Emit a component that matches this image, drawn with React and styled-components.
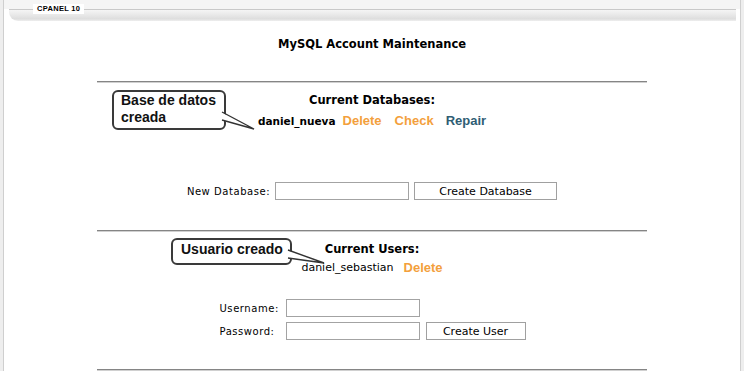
import React from "react";
import styled, { createGlobalStyle } from "styled-components";

const GlobalStyle = createGlobalStyle`
  html, body {
    margin: 0;
    padding: 0;
  }
  body {
    background: #eeeeee;
    font-family: "DejaVu Sans", Verdana, sans-serif;
    color: #000;
  }
`;

const Frame = styled.div`
  margin: 0 3px;
  min-height: 100vh;
  background: #fff;
  border-left: 1px solid #cfcfcf;
  border-right: 1px solid #cfcfcf;
  overflow: hidden;
`;

const Header = styled.div`
  position: relative;
  display: flex;
  height: 21px;
  padding: 9px 4px 0 5px;
  box-sizing: border-box;
  background: linear-gradient(to bottom, #f5f5f5 0, #f5f5f5 9px, #fff 9px);
`;

const Band = styled.div`
  flex: 1;
  height: 11px;
  border-top: 1px solid #c9c9c9;
  border-radius: 0 0 0 9px;
  background: linear-gradient(to bottom, #f5f5f5, #dedede 80%, #eeeeee);
`;

const Legend = styled.span`
  position: absolute;
  left: 29px;
  top: 4px;
  padding: 0 4px;
  background: #fff;
  font-family: "Liberation Sans", Arial, sans-serif;
  font-size: 7.5px;
  font-weight: bold;
  line-height: 10px;
  letter-spacing: 0.3px;
`;

const Content = styled.div`
  width: 550px;
  margin: 0 auto;
`;

const Title = styled.h1`
  margin: 16px 0 0;
  font-size: 11.5px;
  line-height: 14px;
  font-weight: bold;
  text-align: center;
`;

const Rule = styled.hr`
  margin: ${(p) => p.$top || 0}px 0 0;
  height: 0;
  border: 0;
  border-top: 1px solid #858585;
  border-bottom: 1px solid #d0d0d0;
`;

const Section = styled.section`
  position: relative;
  padding: 10px 0 ${(p) => p.$bottom}px;
`;

const Heading = styled.h2`
  margin: 0;
  font-size: 11.5px;
  line-height: 14px;
  font-weight: bold;
  text-align: center;
`;

const ItemRow = styled.div`
  display: flex;
  justify-content: center;
  align-items: center;
  margin-top: ${(p) => p.$top}px;
  line-height: 16px;
`;

const ItemName = styled.span`
  font-size: ${(p) => (p.$bold ? "10.5px" : "11px")};
  font-weight: ${(p) => (p.$bold ? "bold" : "normal")};
`;

const Action = styled.a`
  margin-left: ${(p) => p.$space}px;
  font-family: "Liberation Sans", Arial, sans-serif;
  font-size: 13px;
  font-weight: bold;
  color: ${(p) => (p.$tone === "blue" ? "#2f5d73" : "#f3a03c")};
  text-decoration: none;
  cursor: pointer;
`;

const FormRow = styled.div`
  display: flex;
  justify-content: center;
  align-items: center;
  gap: 5px;
  margin-top: 53px;
`;

const FormGrid = styled.div`
  display: grid;
  grid-template-columns: 61px 134px 100px;
  column-gap: 5px;
  row-gap: 5px;
  align-items: center;
  justify-content: center;
  margin-top: 23px;
`;

const Label = styled.label`
  font-size: 10px;
  letter-spacing: 0.55px;
`;

const Input = styled.input`
  width: 134px;
  height: 18px;
  box-sizing: border-box;
  margin: 0;
  padding: 0 3px;
  border: 1px solid #a3a3a3;
  background: #fff;
  font-family: "DejaVu Sans", Verdana, sans-serif;
  font-size: 11px;
`;

const Button = styled.button`
  width: ${(p) => p.$width}px;
  height: 18px;
  box-sizing: border-box;
  margin: 0 0 0 ${(p) => p.$shift || 0}px;
  padding: 0;
  border: 1px solid #a0a0a0;
  background: #fff;
  font-family: "DejaVu Sans", Verdana, sans-serif;
  font-size: 11px;
  color: #000;
`;

const Callout = styled.div`
  position: absolute;
  left: ${(p) => p.$left}px;
  top: ${(p) => p.$top}px;
  width: ${(p) => p.$width}px;
  height: ${(p) => p.$height}px;
  box-sizing: border-box;
  padding: ${(p) => p.$padTop}px 0 0 ${(p) => p.$padLeft}px;
  border: 2px solid #3a3a3a;
  border-radius: 6px;
  background: #fff;
  font-family: "Liberation Sans", Arial, sans-serif;
  font-size: 14px;
  font-weight: bold;
  line-height: ${(p) => p.$line}px;
  color: #111;
  z-index: 2;
`;

const Tail = styled.svg`
  position: absolute;
  left: calc(100% - 3px);
  top: ${(p) => p.$top}px;
  overflow: visible;
`;

function Pointer({ top, width, height, y1, y2, tipY }) {
  return (
    <Tail $top={top} width={width} height={height}>
      <polygon points={`0,${y1} ${width},${tipY} 0,${y2}`} fill="#fff" />
      <polyline
        points={`1,${y1} ${width},${tipY} 1,${y2}`}
        fill="none"
        stroke="#333"
        strokeWidth="1.4"
      />
    </Tail>
  );
}

export default function App() {
  return (
    <>
      <GlobalStyle />
      <Frame>
        <Header>
          <Band />
          <Legend>CPANEL 10</Legend>
        </Header>
        <Content>
          <Title>MySQL Account Maintenance</Title>
          <Rule $top={30} />

          <Section $bottom={30}>
            <Callout $left={15} $top={7} $width={114} $height={40} $padTop={0} $padLeft={7} $line={17}>
              Base de datos
              <br />
              creada
              <Pointer top={18} width={33} height={22} y1={2} y2={10} tipY={19} />
            </Callout>
            <Heading>Current Databases:</Heading>
            <ItemRow $top={6}>
              <ItemName $bold>daniel_nueva</ItemName>
              <Action $space={7}>Delete</Action>
              <Action $space={13}>Check</Action>
              <Action $space={12} $tone="blue">Repair</Action>
            </ItemRow>
            <FormRow>
              <Label>New Database:</Label>
              <Input type="text" />
              <Button $width={143}>Create Database</Button>
            </FormRow>
          </Section>

          <Rule />

          <Section $bottom={29}>
            <Callout $left={74} $top={6} $width={121} $height={27} $padTop={0} $padLeft={8} $line={19}>
              Usuario creado
              <Pointer top={8} width={37} height={20} y1={2} y2={10} tipY={15} />
            </Callout>
            <Heading>Current Users:</Heading>
            <ItemRow $top={4}>
              <ItemName>daniel_sebastian</ItemName>
              <Action $space={10}>Delete</Action>
            </ItemRow>
            <FormGrid>
              <Label>Username:</Label>
              <Input type="text" />
              <span />
              <Label>Password:</Label>
              <Input type="password" />
              <Button $width={100} $shift={1}>Create User</Button>
            </FormGrid>
          </Section>

          <Rule />
        </Content>
      </Frame>
    </>
  );
}
